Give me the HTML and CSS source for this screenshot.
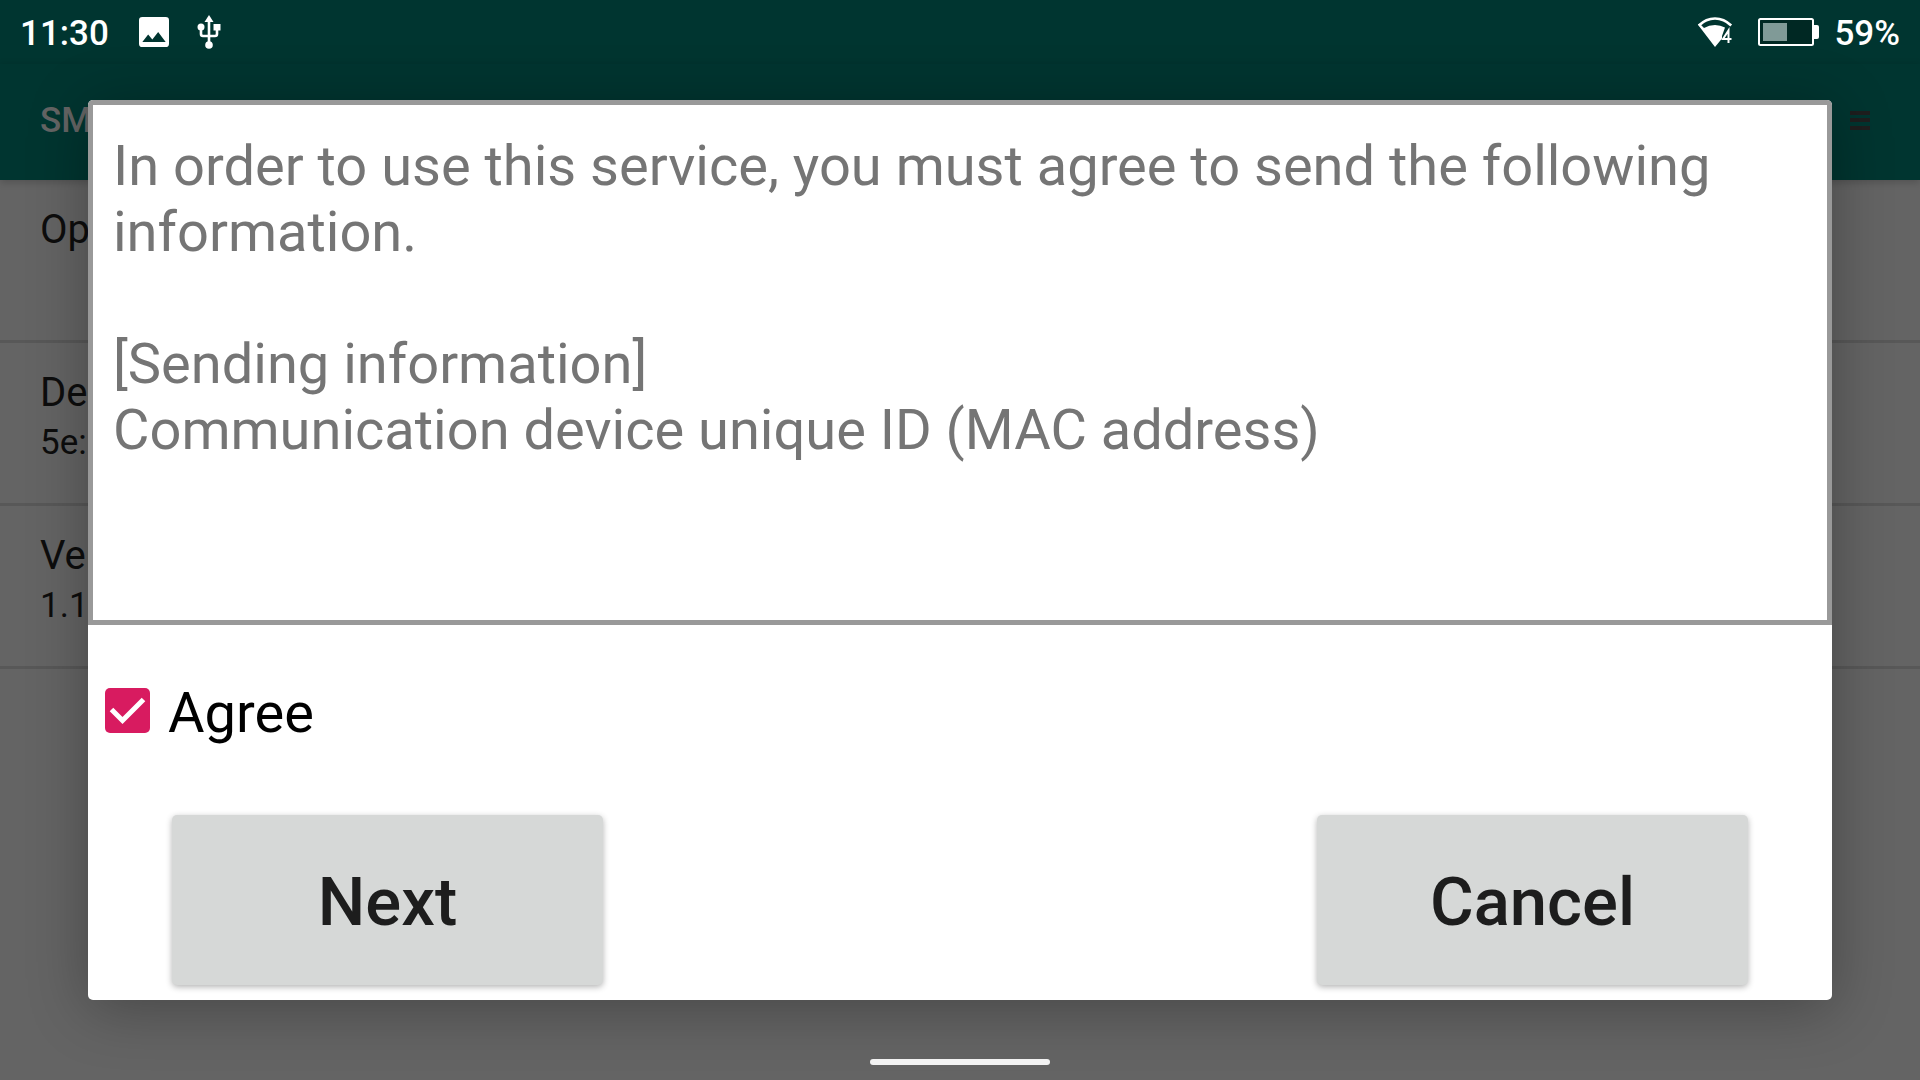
FILE: index.html
```html
<!DOCTYPE html>
<html lang="en">
<head>
<meta charset="utf-8">
<title>Information agreement</title>
<link rel="stylesheet" href="styles.css">
</head>
<body>
<div class="screen">
  <header class="status-bar">
    <span class="status-text">11:30</span>
    <svg class="icon-image" viewBox="3 3 18 18" aria-hidden="true"><path fill="#fff" d="M21 19V5a2 2 0 0 0-2-2H5a2 2 0 0 0-2 2v14a2 2 0 0 0 2 2h14a2 2 0 0 0 2-2zM8.500 13.500l2.500 3 3.500-4.500 4.500 6H5z"/></svg>
    <svg class="icon-usb" viewBox="0 0 24 34" aria-hidden="true"><g fill="none" stroke="#fff" stroke-width="2.600"><path d="M12 4v26M4 13v6q0 2 2 2h12q2 0 2-2v-6"/></g><g fill="#fff"><path d="M12 0l4.500 7h-9z"/><circle cx="4" cy="12" r="3.500"/><path d="M16.500 9h7v6.500h-7z"/><circle cx="12" cy="30" r="3.800"/></g></svg>
    <span class="spacer"></span>
    <svg class="icon-wifi" viewBox="0 0 36 30" aria-hidden="true"><path fill="none" stroke="#fff" stroke-width="2.600" d="M1.800 8.500Q9 1.500 18 1.500t16.200 7"/><path fill="#fff" d="M.800 7.500l2-.800L7 11Q12 8 18 8q5.500 0 10 2.500L25 19v2.500L18 30z"/><path fill="none" stroke="#fff" stroke-width="2" d="M31.500 26V13.500L26 22h8.500"/></svg>
    <svg class="icon-battery" viewBox="0 0 61 28" aria-hidden="true"><rect x="1" y="1" width="54" height="26" rx="1.500" fill="#002823" stroke="#fff" stroke-width="2"/><path fill="#fff" d="M56 7h3q2 0 2 2v10q0 2-2 2h-3z"/><path fill="#809a97" d="M5 5h24v18H5z"/></svg>
    <span class="status-text">59%</span>
  </header>
  <div class="app">
    <div class="app-bar">
      <h1 class="app-title">SM</h1>
      <button class="menu-button" type="button" aria-label="Menu"><svg class="icon-menu" viewBox="0 0 20 20" aria-hidden="true"><path fill="#1e1e1e" d="M0 1h20v4H0zM0 8h20v4H0zM0 16h20v4H0z"/></svg></button>
    </div>
    <ul class="settings">
      <li class="setting"><span class="setting-name">Op</span></li>
      <li class="setting"><span class="setting-name">De</span><span class="setting-value">5e:</span></li>
      <li class="setting"><span class="setting-name">Ver</span><span class="setting-value">1.1</span></li>
    </ul>
  </div>
  <form class="dialog" role="dialog" aria-label="Sending information">
    <div class="terms">
      <p class="terms-text">In order to use this service, you must agree to send the following information.</p>
      <p class="terms-text">[Sending information]<br>Communication device unique ID (MAC address)</p>
    </div>
    <label class="agree"><input class="agree-box" type="checkbox" checked><span>Agree</span></label>
    <div class="actions">
      <button class="action" type="button">Next</button>
      <button class="action" type="button">Cancel</button>
    </div>
  </form>
  <div class="nav-pill"></div>
</div>
</body>
</html>
```
FILE: styles.css
```css
* {
  box-sizing: border-box;
}

body {
  margin: 0;
  background: #646464;
  font-family: Roboto, "Noto Sans", sans-serif;
}

.screen {
  position: relative;
  min-height: 100vh;
  overflow: hidden;
}

.status-bar {
  display: flex;
  align-items: center;
  height: 64px;
  padding: 0 20px;
  background: #003530;
  color: #fff;
}

.status-text {
  padding-top: 4px;
  font-size: 35px;
  font-weight: 500;
  line-height: 60px;
}

.icon-image {
  width: 30px;
  height: 30px;
  margin-left: 30px;
}

.icon-usb {
  width: 24px;
  height: 34px;
  margin-left: 28px;
}

.spacer {
  flex: 1;
}

.icon-wifi {
  width: 36px;
  height: 30px;
  margin-right: 25px;
}

.icon-battery {
  width: 61px;
  height: 28px;
  margin-right: 15px;
}

.app-bar {
  display: flex;
  align-items: center;
  justify-content: space-between;
  height: 116px;
  padding: 0 40px 4px;
  background: #003530;
  box-shadow: 0 2px 8px rgba(0, 0, 0, 0.2);
}

.app-title {
  margin: 0;
  color: #646464;
  font-size: 35px;
  font-weight: 500;
}

.menu-button {
  padding: 10px;
  border: 0;
  background: none;
}

.icon-menu {
  display: block;
  width: 20px;
  height: 20px;
}

.settings {
  margin: 0;
  padding: 0;
  list-style: none;
}

.setting {
  display: flex;
  flex-direction: column;
  height: 163px;
  padding: 25px 40px;
  border-bottom: 3px solid #585858;
  color: #0d0d0d;
}

.setting-name {
  font-size: 40px;
  line-height: 50px;
}

.setting-value {
  font-size: 35px;
  line-height: 50px;
}

.dialog {
  position: absolute;
  top: 100px;
  left: 88px;
  right: 88px;
  padding-bottom: 15px;
  border-radius: 5px;
  background: #fff;
  box-shadow: 0 8px 60px rgba(0, 0, 0, 0.3);
}

.terms {
  display: flex;
  flex-direction: column;
  gap: 66px;
  min-height: 525px;
  padding: 28px 20px;
  border: 5px solid #999;
  border-radius: 5px 5px 0 0;
  color: #757575;
}

.terms-text {
  margin: 0;
  font-size: 56px;
  line-height: 66px;
}

.agree {
  display: inline-flex;
  align-items: center;
  gap: 18px;
  margin: 55px 17px 53px;
  color: #000;
  font-size: 56px;
  line-height: 66px;
}

.agree-box {
  appearance: none;
  width: 45px;
  height: 45px;
  margin: 0 0 6px;
  border-radius: 5px;
  background: #d81b60 url("data:image/svg+xml,%3Csvg xmlns='http://www.w3.org/2000/svg' viewBox='0 0 45 45'%3E%3Cpath d='M6.500 21.500 17.500 32.500 38.500 11.500' fill='none' stroke='%23fff' stroke-width='5'/%3E%3C/svg%3E");
}

.actions {
  display: flex;
  justify-content: space-between;
  padding: 16px 84px 0;
}

.action {
  width: 431px;
  height: 170px;
  padding: 4px 0 0;
  border: 0;
  border-radius: 5px;
  background: #d6d8d7;
  box-shadow: 0 2px 6px rgba(0, 0, 0, 0.3);
  color: #1d1d1d;
  font: 500 67px/80px Roboto, "Noto Sans", sans-serif;
}

.nav-pill {
  position: absolute;
  bottom: 15px;
  left: 50%;
  width: 180px;
  height: 6px;
  margin-left: -90px;
  border-radius: 3px;
  background: #f2f2f2;
}
```
